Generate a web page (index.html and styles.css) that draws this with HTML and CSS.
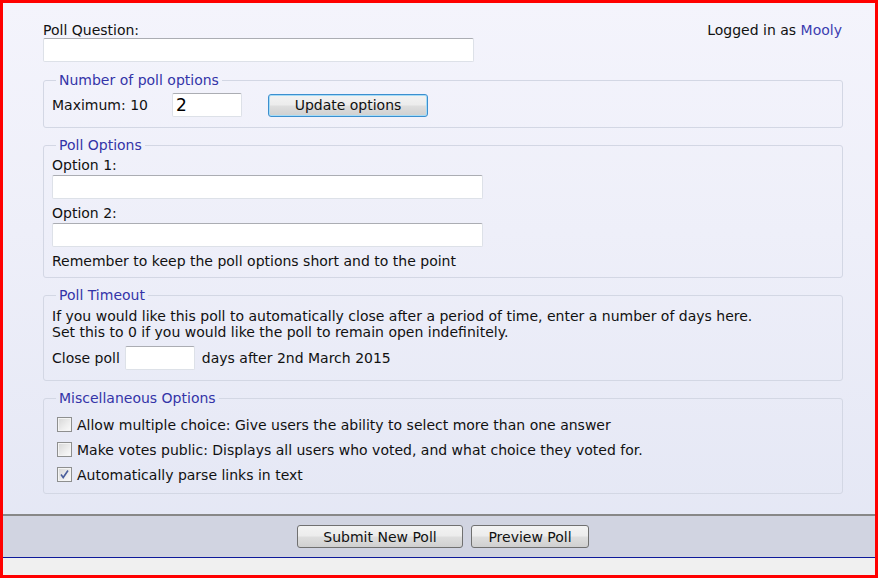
FILE: index.html
```html
<!DOCTYPE html>
<html>
<head>
<meta charset="utf-8">
<title>New Poll</title>
<link rel="stylesheet" href="styles.css">
</head>
<body>
<div class="page">
  <main class="content">
    <div class="top-row">
      <div class="question">
        <div class="label">Poll Question:</div>
        <input class="text wide" type="text">
      </div>
      <div class="login">Logged in as <a class="user" href="#">Mooly</a></div>
    </div>

    <fieldset class="group g-count">
      <legend>Number of poll options</legend>
      <div class="count-row">
        <span class="max-label">Maximum: 10</span>
        <input class="text small big-text" type="text" value="2">
        <button class="btn btn-focus" type="button">Update options</button>
      </div>
    </fieldset>

    <fieldset class="group g-options">
      <legend>Poll Options</legend>
      <div class="label">Option 1:</div>
      <input class="text wide opt" type="text">
      <div class="label spaced">Option 2:</div>
      <input class="text wide opt" type="text">
      <div class="label spaced">Remember to keep the poll options short and to the point</div>
    </fieldset>

    <fieldset class="group g-timeout">
      <legend>Poll Timeout</legend>
      <div class="label">If you would like this poll to automatically close after a period of time, enter a number of days here.</div>
      <div class="label">Set this to 0 if you would like the poll to remain open indefinitely.</div>
      <div class="close-row">
        <span>Close poll</span>
        <input class="text small" type="text">
        <span>days after 2nd March 2015</span>
      </div>
    </fieldset>

    <fieldset class="group g-misc">
      <legend>Miscellaneous Options</legend>
      <div class="check-row"><span class="cb"></span><span>Allow multiple choice: Give users the ability to select more than one answer</span></div>
      <div class="check-row"><span class="cb"></span><span>Make votes public: Displays all users who voted, and what choice they voted for.</span></div>
      <div class="check-row"><span class="cb checked"><svg viewBox="0 0 13 13" width="13" height="13"><path d="M3 6.5 L5.2 9.5 L10 2.5" fill="none" stroke="#4b5f9c" stroke-width="1.6"/></svg></span><span>Automatically parse links in text</span></div>
    </fieldset>
  </main>

  <footer class="actions">
    <div class="actions-inner">
      <button class="btn btn-submit" type="button">Submit New Poll</button>
      <button class="btn btn-preview" type="button">Preview Poll</button>
    </div>
  </footer>
  <div class="bottom-strip"></div>
</div>
</body>
</html>
```

FILE: styles.css
```css
html, body {
  margin: 0;
  padding: 0;
}

body {
  font-family: "DejaVu Sans", Verdana, sans-serif;
  font-size: 14px;
  line-height: 16px;
  color: #111;
}

.page {
  width: 878px;
  height: 578px;
  box-sizing: border-box;
  border: 3px solid #ff0000;
  display: flex;
  flex-direction: column;
  background: linear-gradient(to bottom, #f4f4fc 0%, #eeeff9 40%, #e3e6f4 100%);
}

.content {
  flex: 1;
  padding: 19px 32px 0 40px;
}

.top-row {
  width: 800px;
  display: flex;
  justify-content: space-between;
  align-items: flex-start;
  margin-bottom: 10px;
}

.login {
  padding-right: 1px;
}

.user {
  color: #3c3cb0;
  text-decoration: none;
}

.text {
  box-sizing: border-box;
  height: 24px;
  border: 1px solid #dde1e8;
  border-top-color: #abadb3;
  border-radius: 2px;
  background: #fff;
  font-family: "DejaVu Sans", Verdana, sans-serif;
  font-size: 14px;
  padding: 0 3px;
  margin: 0;
  display: block;
}

.wide {
  width: 431px;
}

.small {
  width: 70px;
}

.big-text {
  font-size: 17px;
  color: #000;
}

.group {
  width: 800px;
  box-sizing: border-box;
  border: 1px solid #d3d7e4;
  border-radius: 3px;
  margin: 0 0 9px 0;
  padding: 5px 8px 10px 8px;
  min-width: 0;
}

.group legend {
  color: #3434a8;
  padding: 0 3px;
  margin-left: 4px;
  line-height: 16px;
}

.count-row {
  display: flex;
  align-items: center;
}

.max-label {
  width: 120px;
}

.btn {
  font-family: "DejaVu Sans", Verdana, sans-serif;
  font-size: 14px;
  color: #111;
  height: 23px;
  box-sizing: border-box;
  border: 1px solid #707070;
  border-radius: 3px;
  background: linear-gradient(to bottom, #f3f3f3 0%, #ececec 48%, #dedede 52%, #d0d0d0 100%);
  padding: 0;
  margin: 0;
  cursor: pointer;
}

.btn-focus {
  width: 160px;
  margin-left: 26px;
  border-color: #3c8fcf;
  box-shadow: inset 0 0 0 1px #a6dcf6;
}

.g-options {
  padding-top: 4px;
  padding-bottom: 8px;
}

.g-options .opt {
  margin-top: 2px;
}

.g-options .spaced {
  margin-top: 6px;
}

.close-row {
  display: flex;
  align-items: center;
  margin-top: 6px;
}

.close-row .small {
  margin: 0 7px 0 5px;
}

.g-misc {
  padding-top: 6px;
  padding-bottom: 6px;
}

.check-row {
  height: 25px;
  display: flex;
  align-items: center;
}

.cb {
  width: 13px;
  height: 13px;
  border: 1px solid #8e8f8f;
  background: linear-gradient(135deg, #d6d6d6 0%, #eeeeee 60%, #fbfbfb 100%);
  box-shadow: inset 0 0 0 1px #f4f4f4;
  margin: 0 5px 0 5px;
  flex: none;
}

.cb svg {
  display: block;
}

.actions {
  border-top: 2px solid #878787;
  background: #d1d4e1;
  border-bottom: 1px solid #0e1a9a;
  padding: 9px 0 9px 40px;
}

.actions-inner {
  width: 800px;
  display: flex;
  justify-content: center;
  gap: 8px;
}

.btn-submit {
  width: 166px;
}

.btn-preview {
  width: 118px;
}

.bottom-strip {
  height: 17px;
  background: #f0f0f0;
}
```
